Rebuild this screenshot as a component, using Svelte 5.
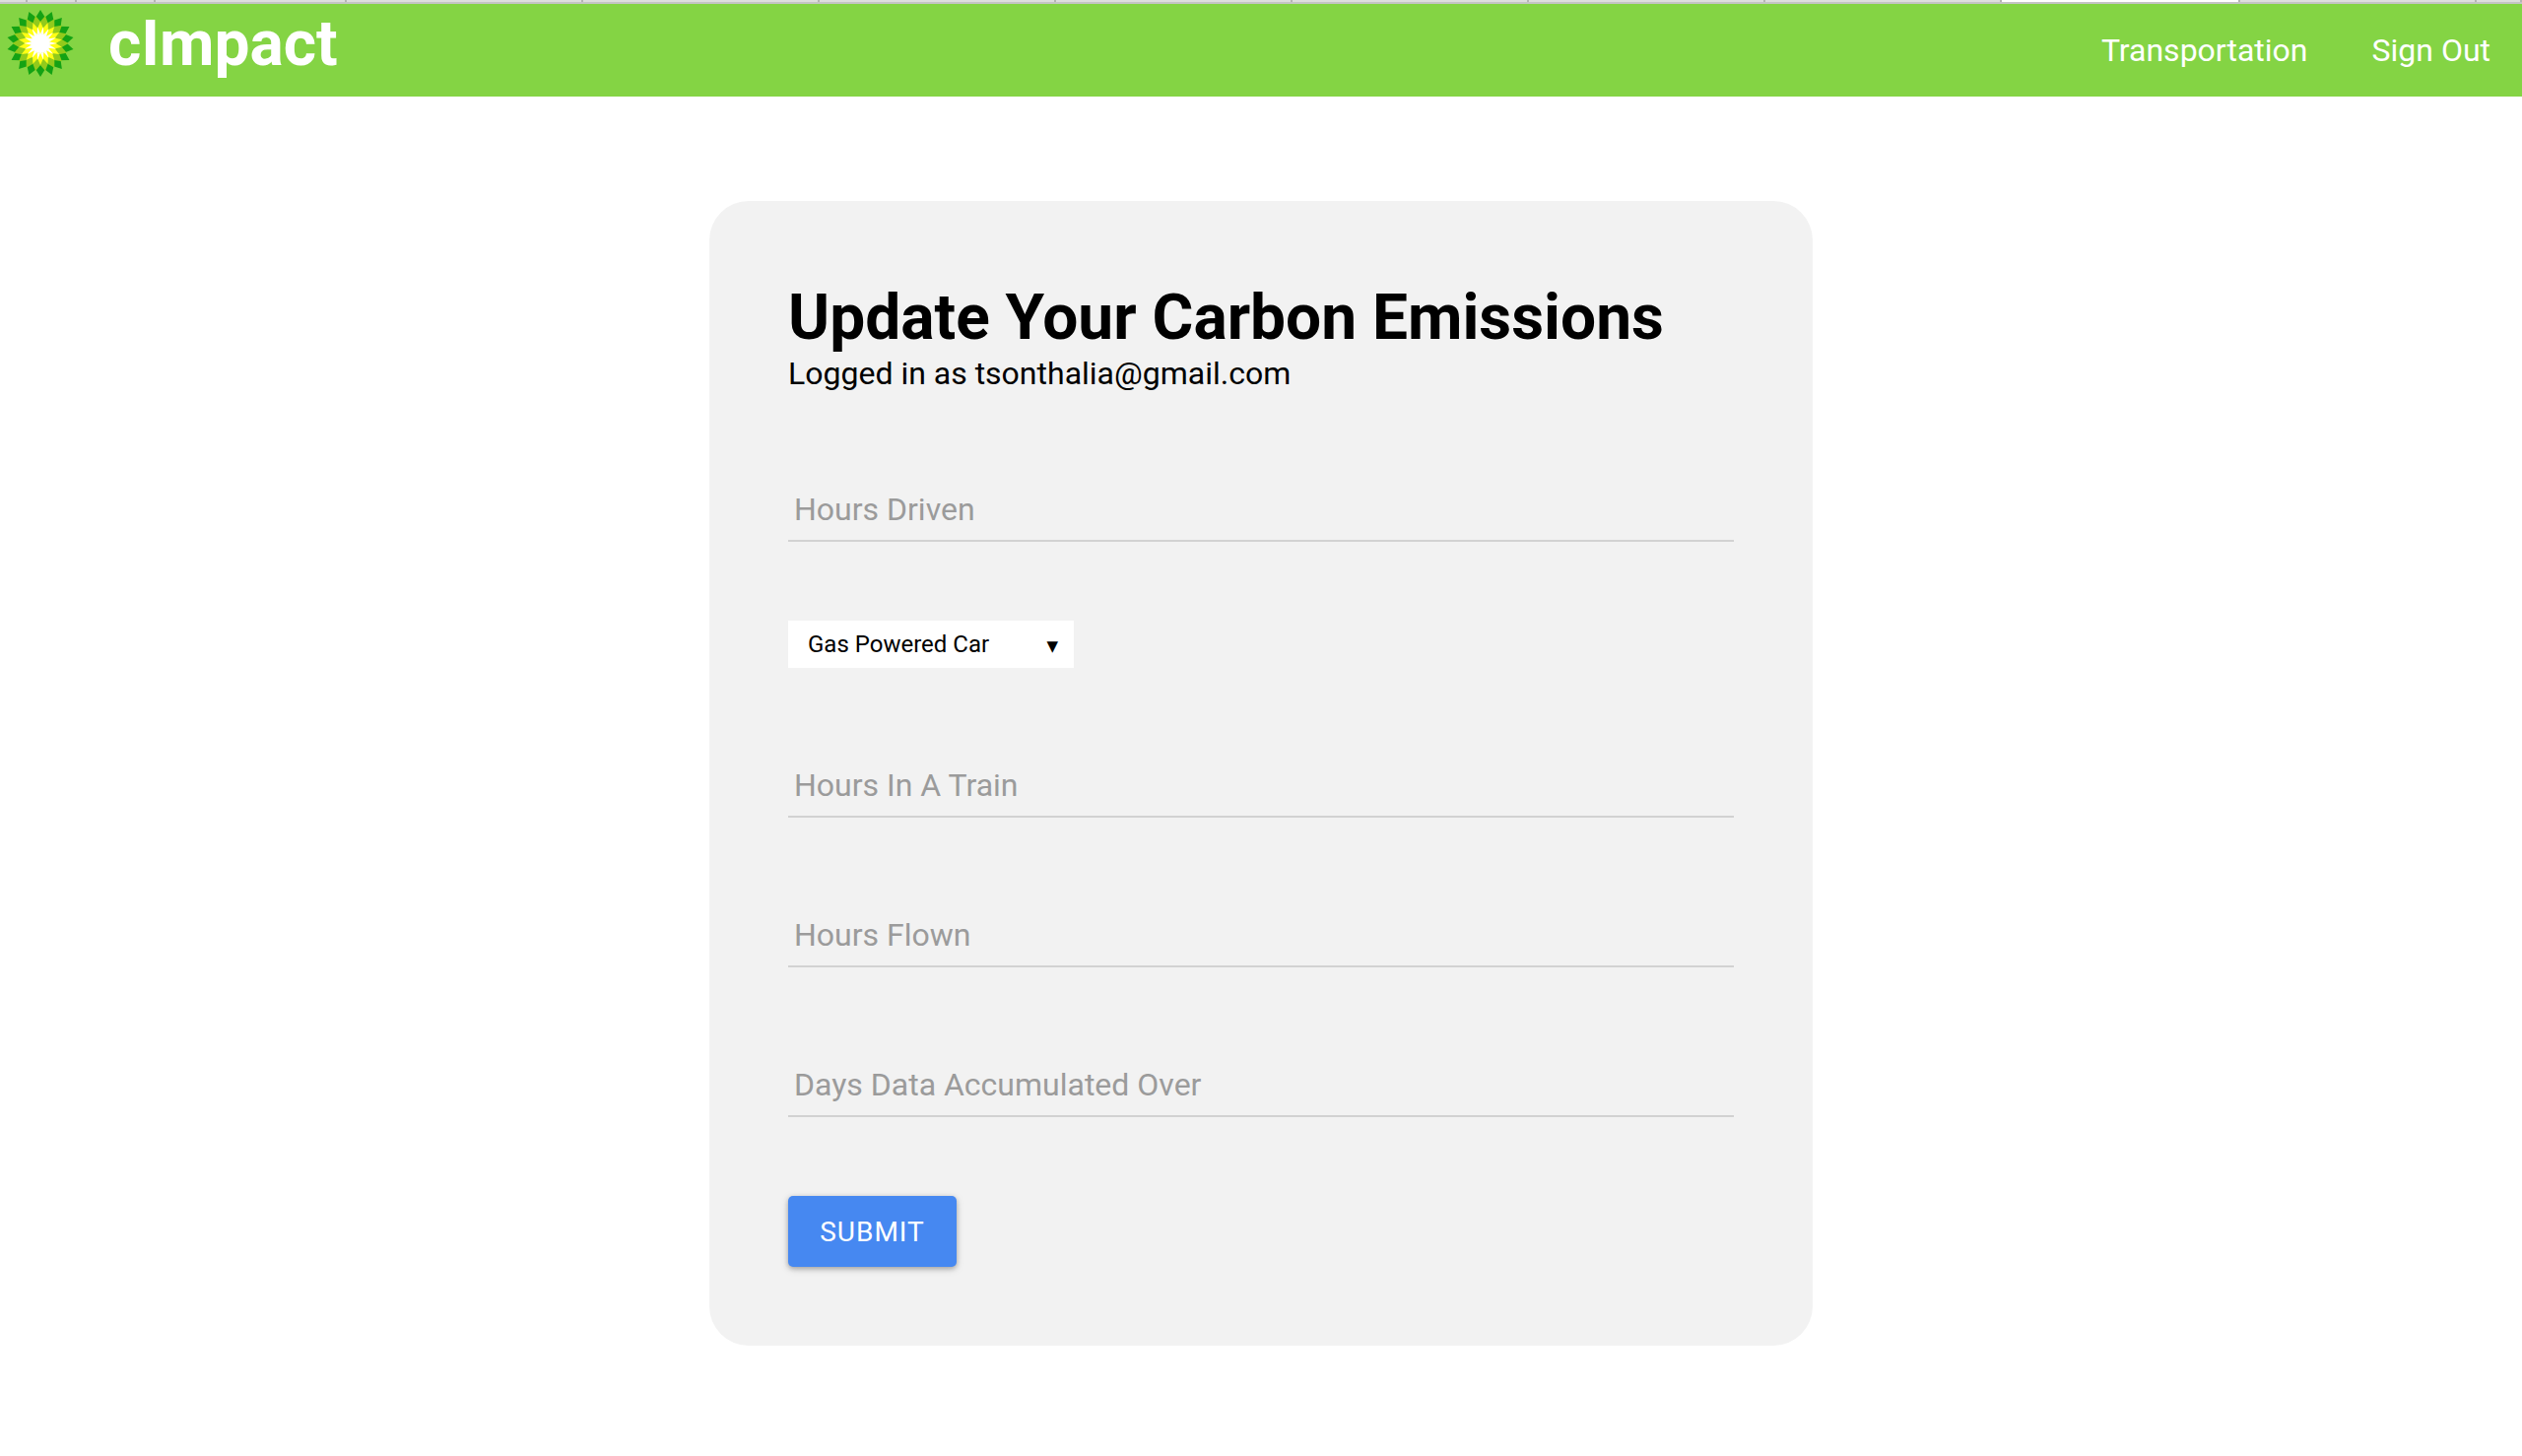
<script>
  const tabStops = [0, 28, 78, 158, 352, 592, 832, 1072, 1312, 1552, 1792, 2032, 2274, 2514, 2560];
  const tabs = tabStops.slice(0, -1).map((x, i) => ({
    width: tabStops[i + 1] - x,
    active: x === 2032
  }));
  const fields = ['Hours In A Train', 'Hours Flown', 'Days Data Accumulated Over'];
  const angles = (n, offset = 0) => Array.from({ length: n }, (_, i) => offset + (i * 360) / n);
</script>

<div class="tabstrip">
  {#each tabs as tab}
    <div class="tab" class:active={tab.active} style="width:{tab.width}px"></div>
  {/each}
</div>

<header class="navbar">
  <div class="brand">
    <svg class="logo" viewBox="-34 -34 68 68" aria-hidden="true">
      {#each angles(18) as a}
        <path d="M0 -34 L5.6 -25 L0 -14 L-5.6 -25 Z" fill="#14a214" transform="rotate({a})" />
      {/each}
      {#each angles(18, 10) as a}
        <path d="M0 -28.5 L5 -20 L0 -10 L-5 -20 Z" fill="#92ca1c" transform="rotate({a})" />
      {/each}
      {#each angles(18) as a}
        <path d="M0 -22 L3 -15 L0 -6 L-3 -15 Z" fill="#ffff14" transform="rotate({a})" />
      {/each}
      <circle r="10" fill="#fff" />
      {#each angles(18, 10) as a}
        <path d="M0 -17 L1.6 -9.5 L-1.6 -9.5 Z" fill="#fff" transform="rotate({a})" />
      {/each}
    </svg>
    <span class="title">cImpact</span>
  </div>
  <nav class="links">
    <span>Transportation</span>
    <span>Sign Out</span>
  </nav>
</header>

<main class="page">
  <form class="card">
    <h1>Update Your Carbon Emissions</h1>
    <p class="who">Logged in as tsonthalia@gmail.com</p>

    <input class="field first" type="text" placeholder="Hours Driven" />

    <div class="select">
      <span>Gas Powered Car</span>
      <span class="arrow">▼</span>
    </div>

    {#each fields as f}
      <input class="field" type="text" placeholder={f} />
    {/each}

    <button class="submit" type="button">Submit</button>
  </form>
</main>

<style>
  :global(body) {
    margin: 0;
    background: #fff;
    font-family: Roboto, "Liberation Sans", sans-serif;
  }

  .tabstrip {
    display: flex;
    height: 4px;
    background: #c9c9c9;
    box-sizing: border-box;
    border-bottom: 2px solid #c4c4c4;
  }

  .tab {
    box-sizing: border-box;
    height: 2px;
    background: #dedede;
    border-right: 2px solid #b4b4b4;
  }

  .tab.active {
    background: #fff;
  }

  .navbar {
    height: 94px;
    background: #84d444;
    display: flex;
    align-items: flex-start;
    justify-content: space-between;
    color: #fff;
  }

  .brand {
    display: flex;
    align-items: center;
    gap: 35px;
    margin-left: 7px;
    height: 80px;
  }

  .logo {
    width: 68px;
    height: 68px;
    display: block;
  }

  .title {
    font-size: 64px;
    font-weight: 700;
    line-height: 80px;
    margin-top: 2px;
  }

  .links {
    display: flex;
    gap: 65px;
    padding-right: 32px;
    font-size: 32px;
    line-height: 40px;
    margin-top: 27px;
  }

  .page {
    display: flex;
    justify-content: center;
    padding-top: 106px;
  }

  .card {
    box-sizing: border-box;
    width: 1120px;
    height: 1162px;
    background: #f2f2f2;
    border-radius: 40px;
    padding: 81px 80px 0;
    display: flex;
    flex-direction: column;
    align-items: flex-start;
  }

  h1 {
    margin: 0;
    font-size: 64px;
    font-weight: 700;
    line-height: 75px;
    color: #000;
  }

  .who {
    margin: 0;
    font-size: 32px;
    line-height: 38px;
    color: #000;
  }

  .field {
    box-sizing: border-box;
    width: 960px;
    height: 72px;
    margin-top: 80px;
    padding: 7px 6px 0;
    border: 0;
    border-bottom: 2px solid #d2d2d2;
    border-radius: 0;
    background: transparent;
    font: 400 32px Roboto, sans-serif;
    outline: none;
    flex: none;
  }

  .field::placeholder {
    color: #9b9b9b;
    opacity: 1;
  }

  .select {
    box-sizing: border-box;
    width: 290px;
    height: 48px;
    margin-top: 80px;
    padding: 0 20px;
    background: #fff;
    display: flex;
    align-items: center;
    justify-content: space-between;
    font-size: 24px;
    color: #000;
  }

  .arrow {
    font-size: 15px;
    font-family: "DejaVu Sans", sans-serif;
    margin-top: 4px;
    margin-right: -4px;
  }

  .submit {
    margin-top: 80px;
    width: 171px;
    height: 72px;
    border: 0;
    border-radius: 5px;
    background: #4688f1;
    color: #fff;
    font: 400 28px Roboto, sans-serif;
    text-transform: uppercase;
    letter-spacing: 1px;
    box-shadow: 0 2px 5px rgba(0, 0, 0, 0.26), 0 2px 10px rgba(0, 0, 0, 0.12);
    padding: 0;
    flex: none;
  }
</style>
